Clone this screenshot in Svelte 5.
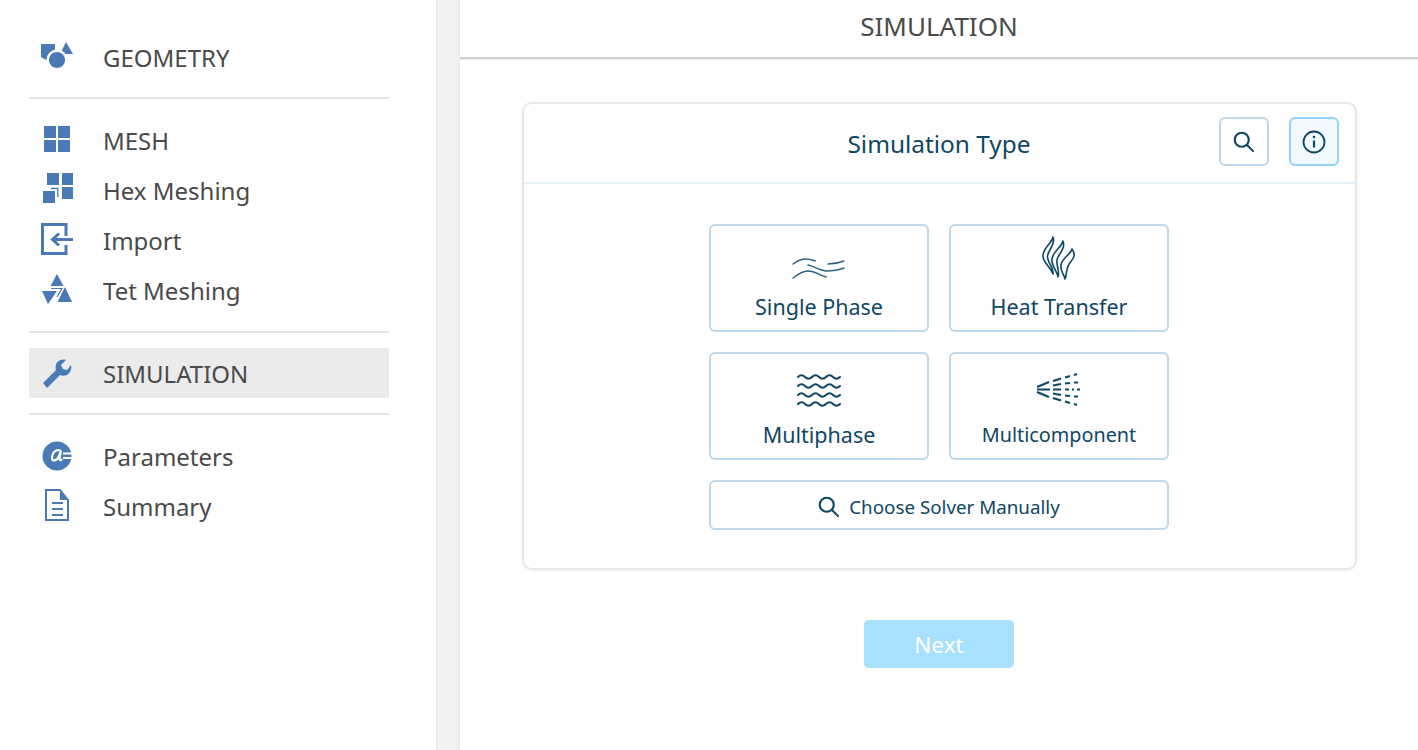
<script>
  const tiles = [
    { id: "single", label: "Single Phase" },
    { id: "heat", label: "Heat Transfer" },
    { id: "multi", label: "Multiphase" },
    { id: "comp", label: "Multicomponent" }
  ];
</script>

{#snippet search(size)}
  <svg width={size} height={size} viewBox="0 0 24 24" fill="none" stroke="#0f4663" stroke-width="2.4" stroke-linecap="round">
    <circle cx="10" cy="10" r="8" />
    <path d="M16 16 L23 23" />
  </svg>
{/snippet}

<div class="page">
  <aside class="sidebar">
    <section class="group first">
      <div class="item">
        <svg class="icon" viewBox="0 0 34 34">
          <path d="M2 4H16V12L9 21L2 17Z" />
          <path d="M27 2L34 14H21Z" />
          <circle cx="18" cy="20" r="9.300" stroke="#fff" stroke-width="2.400" />
        </svg>
        <span>GEOMETRY</span>
      </div>
    </section>
    <section class="group">
      <div class="item">
        <svg class="icon" viewBox="0 0 34 34">
          <path d="M5 3h12v12H5zM19 3h12v12H19zM5 17h12v12H5zM19 17h12v12H19z" />
        </svg>
        <span>MESH</span>
      </div>
      <div class="item">
        <svg class="icon" viewBox="0 0 34 34">
          <path d="M8 0h12v12H8zM23 0h11v12H23zM23 14h11v12H23z" />
          <path d="M4 18h12v12H4z" />
          <path d="M12 15.500H18.800V24" fill="none" stroke="#4a7ab5" stroke-width="1.300" />
        </svg>
        <span>Hex Meshing</span>
      </div>
      <div class="item">
        <svg class="icon" viewBox="0 0 34 34">
          <path d="M27 13V1.500H3.500V30.500H27V22" fill="none" stroke="#4a7ab5" stroke-width="3" />
          <path d="M34 16.500H15M20 10.500l-6.500 6 6.500 6" fill="none" stroke="#4a7ab5" stroke-width="3" />
        </svg>
        <span>Import</span>
      </div>
      <div class="item">
        <svg class="icon" viewBox="0 0 34 34">
          <path d="M18 1L24.500 13H11.500Z" />
          <path d="M3 18H18L9 31Z" />
          <path d="M26 14L33 29H18.500Z" />
          <path d="M12 15.500H23L18 24" fill="none" stroke="#4a7ab5" stroke-width="1.200" />
        </svg>
        <span>Tet Meshing</span>
      </div>
    </section>
    <section class="group mid">
      <div class="item active">
        <svg class="icon" viewBox="0 0 34 34">
          <path d="M4 27 L17 14 C15 8 20 2 27 4 L22 9 L24 13 L28 14 L32 9 C34 16 27 22 21 19 L8 32 Z" />
        </svg>
        <span>SIMULATION</span>
      </div>
    </section>
    <section class="group last">
      <div class="item">
        <svg class="icon" viewBox="0 0 34 34">
          <circle cx="18" cy="17" r="14.500" />
          <path d="M22 12c-5-3-9 2-9 7 0 4 5 3 7-2l2-5-1.500 7c-.5 2 1 3 2.500 1" fill="none" stroke="#fff" stroke-width="2.200" />
          <path d="M24 14.500h9M24 19h9" stroke="#fff" stroke-width="2" />
        </svg>
        <span>Parameters</span>
      </div>
      <div class="item">
        <svg class="icon" viewBox="0 0 34 34">
          <path d="M7 1h14l8 10v20H7z" fill="none" stroke="#4a7ab5" stroke-width="2" />
          <path d="M21 1v10h8z" />
          <path d="M13 14h11M13 20h11M13 26h11" stroke="#4a7ab5" stroke-width="2" />
        </svg>
        <span>Summary</span>
      </div>
    </section>
  </aside>

  <main class="main">
    <header class="topbar">SIMULATION</header>
    <div class="content">
      <div class="card">
        <div class="card-head">
          <h2>Simulation Type</h2>
          <div class="tools">
            <button class="tool">{@render search(21)}</button>
            <button class="tool on">
              <svg width="24" height="24" viewBox="0 0 24 24" fill="none" stroke="#0f4663" stroke-width="1.800">
                <circle cx="12" cy="12" r="10.500" />
                <path d="M12 10.500v7" stroke-width="2.200" />
                <circle cx="12" cy="7" r="1.300" fill="#0f4663" stroke="none" />
              </svg>
            </button>
          </div>
        </div>
        <div class="card-body">
          <div class="tiles">
            {#each tiles as tile}
              <button class="tile">
                <span class="tile-icon">
                  {#if tile.id === "single"}
                    <svg width="54" height="22" viewBox="0 0 54 22" fill="none" stroke="#2b6380" stroke-width="1.500" stroke-linecap="round">
                      <path d="M1 6C5 3 9 1 14 1c4 0 6 1 9 2" />
                      <path d="M16 7c6 1 10 5 18 6 7 0 13-1 18-3" />
                      <path d="M36 6c6 0 11-1 16-3" />
                      <path d="M1 20c5-4 9-7 15-7 7 0 11 4 18 6" />
                    </svg>
                  {:else if tile.id === "heat"}
                    <svg width="36" height="44" viewBox="0 0 36 44" fill="none" stroke="#0f4663" stroke-width="1.600" stroke-linejoin="round">
                      <path d="M12 1C11 7 3 11 2 19 1 26 9 30 12 38 13 32 6 26 6.500 20 7 14 15 9 12 1Z" />
                      <path d="M22 5C21 11 12 15 11 23 10 30 16 34 17 41 19 35 15 29 16 24 17 18 25 13 22 5Z" />
                      <path d="M31 13C30 18 21 22 20 29 19 35 23 38 24 43 26 38 25 33 28 28 31 24 36 20 31 13Z" />
                    </svg>
                  {:else if tile.id === "multi"}
                    <svg width="46" height="34" viewBox="0 0 46 34" fill="none" stroke="#0f4663" stroke-width="2" stroke-linecap="round">
                      {#each [3, 12, 21, 30] as y}
                        <path d="M2 {y}q3.500 -3.500 7 0t7 0t7 0t7 0t7 0t7 0" />
                      {/each}
                    </svg>
                  {:else}
                    <svg width="46" height="36" viewBox="0 0 46 36" fill="none" stroke="#0f4663" stroke-width="2.200">
                      <path d="M1 15L13 10M1 17.500H14M1 20L13 25" />
                      <path d="M17 9L25 6.500M29 5.500L34 4M38 3L41 2" />
                      <path d="M17 13.500L25 12M29 11.500L34 11M38 10.500H42" />
                      <path d="M17 17.500H25M29 17.500H33M36 17.500H38M41 17.500H44" />
                      <path d="M17 21.500L25 23M29 23.500L34 24M38 24.500H42" />
                      <path d="M17 26L25 28.500M29 29.500L34 31M38 32L41 33" />
                    </svg>
                  {/if}
                </span>
                <span class="tile-label" class:small={tile.id === "comp"}>{tile.label}</span>
              </button>
            {/each}
            <button class="manual">{@render search(21)}<span>Choose Solver Manually</span></button>
          </div>
        </div>
      </div>
      <button class="next">Next</button>
    </div>
  </main>
</div>

<style>
  :global(body) {
    margin: 0;
    background: #fff;
  }

  .page {
    display: flex;
    height: 750px;
    overflow: hidden;
    font-family: "Noto Sans", "Open Sans", sans-serif;
    background: #f1f1f1;
  }

  .sidebar {
    width: 437px;
    flex: none;
    box-sizing: border-box;
    padding: 32px 47px 0 29px;
    background: #fff;
    border-right: 1px solid #e9e9e9;
  }

  .group {
    padding: 16px 0;
    border-bottom: 2px solid #e2e2e2;
  }
  .group.first {
    padding: 0 0 15px;
  }
  .group.mid {
    padding: 15px 0 15px;
  }
  .group.last {
    padding-top: 16px;
    border-bottom: 0;
  }

  .item {
    display: flex;
    align-items: center;
    height: 50px;
    padding-left: 10px;
    gap: 30px;
    font-size: 24px;
    color: #4a4a4a;
  }
  .item.active {
    background: #ebebeb;
  }

  .icon {
    width: 34px;
    height: 34px;
    fill: #4a7ab5;
    flex: none;
  }

  .main {
    margin-left: 22px;
    flex: 1;
    background: #fff;
    border-left: 1px solid #e6e6e6;
    display: flex;
    flex-direction: column;
  }

  .topbar {
    height: 59px;
    flex: none;
    box-sizing: border-box;
    display: flex;
    align-items: center;
    justify-content: center;
    padding-bottom: 5px;
    font-size: 26px;
    color: #4a4a4a;
    border-bottom: 2px solid #cfcfcf;
    box-shadow: 0 1px 1px #eee;
  }

  .content {
    display: flex;
    flex-direction: column;
    align-items: center;
    padding: 43px 61px 0 61px;
  }

  .card {
    width: 835px;
    height: 468px;
    box-sizing: border-box;
    border: 2px solid #e8e8e8;
    border-radius: 10px;
    box-shadow: 0 1px 3px rgba(0, 0, 0, 0.06);
  }

  .card-head {
    height: 80px;
    box-sizing: border-box;
    border-bottom: 2px solid #e4f0f8;
    position: relative;
    display: flex;
    align-items: center;
    justify-content: center;
  }
  .card-head h2 {
    margin: 0;
    font-size: 24.4px;
    font-weight: 400;
    color: #0f4663;
  }

  .tools {
    position: absolute;
    right: 16px;
    top: 13px;
    display: flex;
    gap: 20px;
  }

  button {
    font-family: inherit;
    background: #fff;
    cursor: pointer;
    padding: 0;
  }

  .tool {
    width: 50px;
    height: 49px;
    border: 2px solid #bfd9ea;
    border-radius: 6px;
    display: flex;
    align-items: center;
    justify-content: center;
  }
  .tool.on {
    border-color: #93d2fb;
    background: #f2f9ff;
  }

  .card-body {
    display: flex;
    justify-content: center;
    padding-top: 40px;
  }

  .tiles {
    display: grid;
    grid-template-columns: 220px 220px;
    grid-auto-rows: 108px;
    gap: 20px;
  }

  .tile {
    border: 2px solid #bfd9ea;
    border-radius: 6px;
    display: flex;
    flex-direction: column;
    align-items: center;
    color: #0f4663;
    box-sizing: border-box;
    height: 108px;
  }
  .tile-icon {
    height: 54px;
    display: flex;
    align-items: flex-end;
    justify-content: center;
  }
  .tile-label {
    margin-top: 7px;
    font-size: 21.500px;
    line-height: 40px;
  }
  .tile-label.small {
    font-size: 19.800px;
  }

  .manual {
    grid-column: span 2;
    height: 50px;
    padding-top: 2px;
    border: 2px solid #bfd9ea;
    border-radius: 6px;
    display: flex;
    align-items: center;
    justify-content: center;
    gap: 10px;
    font-size: 18.800px;
    color: #0f4663;
  }
  .manual span {
    padding-top: 2px;
  }

  .next {
    margin-top: 50px;
    width: 150px;
    height: 48px;
    border: 0;
    border-radius: 5px;
    background: #a8e0ff;
    color: #fff;
    font-size: 22.600px;
  }
</style>
